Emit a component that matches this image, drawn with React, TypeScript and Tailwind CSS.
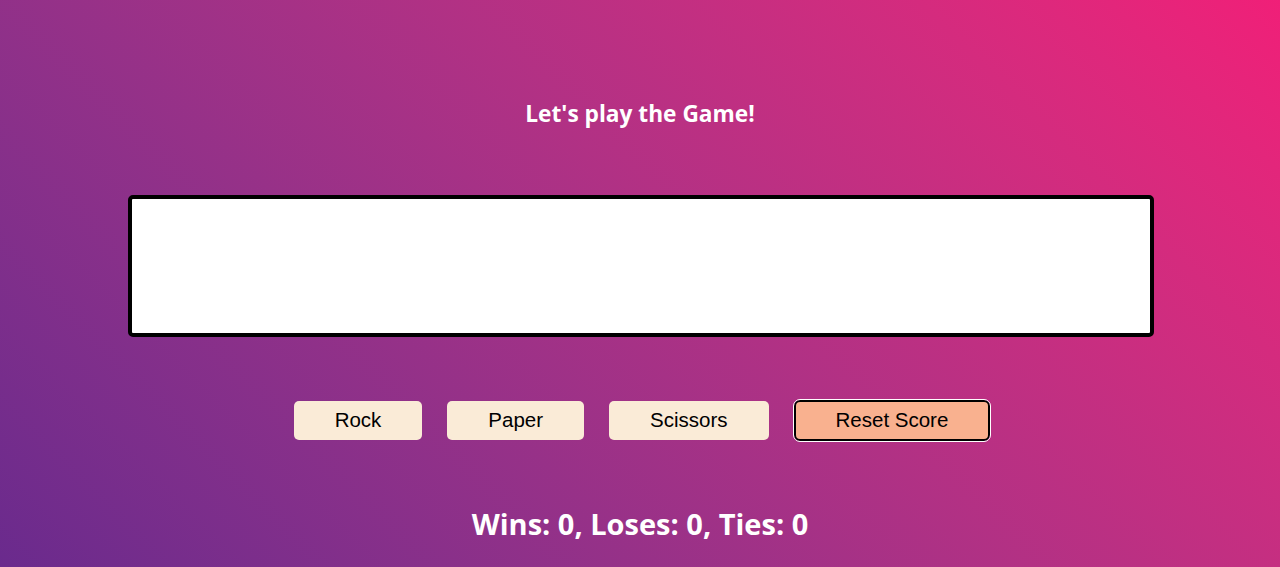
import React from 'react';

const choices = ['Rock', 'Paper', 'Scissors'];

export default function App() {
  return (
    <div className="min-h-screen w-full bg-linear-45 from-[#6a2a8d] to-[#f01f78] flex flex-col items-center font-['Open_Sans',sans-serif] text-white">
      <h1 className="mt-[99px] text-[22.7px] leading-[30px] font-bold">Let's play the Game!</h1>

      <div className="mt-[66px] w-[1026px] h-[142px] bg-white border-4 border-black rounded-[5px] translate-x-[1px]"></div>

      <div className="mt-[63px] ml-[4px] flex items-center gap-[25px] font-['Liberation_Sans',Arial,sans-serif] text-[20.5px] text-black">
        {choices.map(c => (
          <button key={c} className="h-[39px] px-[41px] bg-[#faebd7] rounded-[5px]">
            {c}
          </button>
        ))}
        <button className="h-[41px] px-[40px] bg-[#f9b18f] border-2 border-black rounded-[6px] outline outline-1 outline-white">
          Reset Score
        </button>
      </div>

      <div className="mt-[65px] text-[29px] leading-[36px] font-bold">Wins: 0, Loses: 0, Ties: 0</div>
    </div>
  );
}
